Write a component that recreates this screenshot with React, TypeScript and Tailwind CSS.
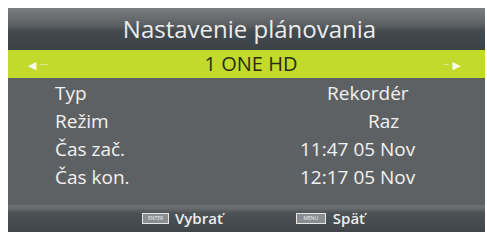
export default function App() {
  const rows = [
    { label: "Typ", value: "Rekordér", pos: "pl-[27px]" },
    { label: "Režim", value: "Raz", pos: "pl-[68px]" },
    { label: "Čas zač.", value: "11:47 05 Nov", pos: "pl-0" },
    { label: "Čas kon.", value: "12:17 05 Nov", pos: "pl-0" },
  ];

  return (
    <div
      className="h-[232px] w-[487px] bg-white pt-2 pr-[2px] pl-2"
      style={{ fontFamily: '"Open Sans", "DejaVu Sans", sans-serif' }}
    >
      <div className="flex h-[224px] flex-col">
        {/* Title */}
        <div className="flex h-[42px] items-center justify-center bg-[linear-gradient(to_bottom,#7a7e80_0%,#5c6063_40%,#434a4f_55%,#3b4247_100%)] pl-[6px] text-[24px] leading-none text-[#ececec]">
          Nastavenie plánovania
        </div>

        {/* Channel bar */}
        <div className="flex h-[28px] items-center justify-between bg-[#c2da2b] pr-[24px] pl-[20px]">
          <div className="flex items-center gap-[4px]">
            <span className="text-[11px] leading-none text-[#f7fae0]">◀</span>
            <span className="h-px w-[8px] bg-[#dbe98a]" />
          </div>
          <span className="pl-[10px] text-[20px] leading-none text-[#2b2d12]">
            1 ONE HD
          </span>
          <div className="flex items-center gap-[4px]">
            <span className="h-px w-[5px] bg-[#dbe98a]" />
            <span className="text-[11px] leading-none text-[#f7fae0]">▶</span>
          </div>
        </div>

        {/* Settings */}
        <div className="flex h-[127px] flex-col bg-[#5e6163] pt-px pl-[47px] text-[19px] text-[#f2f2f2]">
          {rows.map((row) => (
            <div key={row.label} className="flex h-[28px] items-center">
              <span className="w-[245px] leading-none">{row.label}</span>
              <span className={`leading-none ${row.pos}`}>{row.value}</span>
            </div>
          ))}
        </div>

        {/* Footer */}
        <div className="flex h-[27px] items-center bg-[linear-gradient(to_bottom,#6c7073_0%,#686c6f_12%,#4c5154_30%,#41464a_100%)] pl-[134px] text-[15px] leading-none text-[#eeeeee]">
          <div className="flex items-center gap-[6px]">
            <span className="flex h-[11px] w-[27px] items-center justify-center border border-[#e6e6e6] bg-[#8a8d90] text-[5px] leading-none text-[#f0f0f0]">
              ENTER
            </span>
            <span className="font-semibold">Vybrať</span>
          </div>
          <div className="ml-[73px] flex items-center gap-[7px]">
            <span className="flex h-[11px] w-[30px] items-center justify-center border border-[#e6e6e6] bg-[#8a8d90] text-[5px] leading-none text-[#f0f0f0]">
              MENU
            </span>
            <span className="font-semibold">Späť</span>
          </div>
        </div>
      </div>
    </div>
  );
}
